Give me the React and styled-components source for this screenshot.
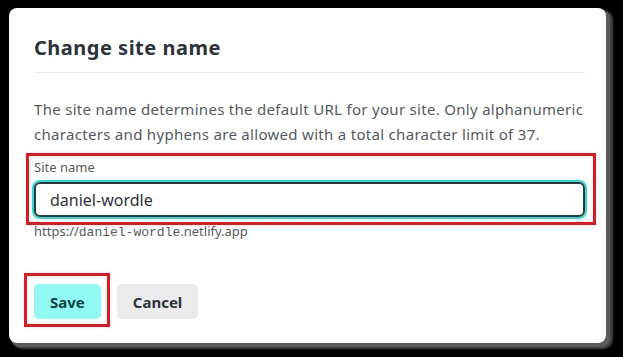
import React from "react";
import styled, { createGlobalStyle } from "styled-components";

const Global = createGlobalStyle`
  html, body { margin: 0; padding: 0; background: #000; }
  body { font-family: "Noto Sans", "Open Sans", sans-serif; }
  * { box-sizing: border-box; }
`;

const Page = styled.div`
  width: 623px;
  height: 357px;
  background: #000;
  padding: 8px 0 0 9px;
`;

const Card = styled.div`
  width: 597px;
  height: 335px;
  background: #fff;
  border-radius: 8px;
  box-shadow: 3px 3px 0 1px #5b5b5b, 5px 4px 2px 2px #444;
  padding: 26px 21px 0 25px;
  display: flex;
  flex-direction: column;
`;

const Title = styled.h2`
  margin: 0;
  font-size: 20px;
  font-weight: 700;
  letter-spacing: 0.5px;
  color: #2d3338;
  line-height: 28px;
  padding-bottom: 10px;
  border-bottom: 1px solid #e9ebed;
`;

const Text = styled.p`
  margin: 24px 0 0;
  font-size: 15px;
  line-height: 25px;
  color: #545a61;
  letter-spacing: 0.3px;
`;

const Annotated = styled.div`
  position: relative;
  margin-top: ${p => p.$mt || 0}px;
  &::after {
    content: "";
    position: absolute;
    left: ${p => p.$l}px;
    right: ${p => p.$r}px;
    top: ${p => p.$t}px;
    bottom: ${p => p.$b}px;
    border: 3px solid #e8151f;
    pointer-events: none;
  }
`;

const Field = styled.div`
  display: flex;
  flex-direction: column;
`;

const Label = styled.label`
  font-size: 13px;
  line-height: 18px;
  color: #545a61;
`;

const Input = styled.div`
  margin-top: 6px;
  height: 35px;
  border: 2px solid #30363b;
  border-radius: 6px;
  box-shadow: 0 0 0 2px #2bdcd6;
  display: flex;
  align-items: center;
  padding-left: 14px;
  font-size: 16px;
  color: #2d3338;
`;

const Hint = styled.div`
  margin-top: 5px;
  font-size: 13px;
  line-height: 18px;
  color: #545a61;
`;

const Mono = styled.span`
  font-family: "Liberation Mono", "DejaVu Sans Mono", monospace;
  font-size: 13px;
`;

const Actions = styled.div`
  margin-top: 42px;
  display: flex;
  gap: 16px;
`;

const Button = styled.button`
  height: 35px;
  border: none;
  border-radius: 5px;
  padding: 0 16px;
  font-family: inherit;
  font-size: 15px;
  font-weight: 700;
  background: ${p => (p.$primary ? "#8ff9f2" : "#e9ebed")};
  color: ${p => (p.$primary ? "#0d4441" : "#2d3338")};
`;

export default function App() {
  return (
    <>
      <Global />
      <Page>
        <Card>
          <Title>Change site name</Title>
          <Text>
            The site name determines the default URL for your site. Only alphanumeric
            characters and hyphens are allowed with a total character limit of 37.
          </Text>
          <Annotated $mt={11} $l={-8} $r={-11} $t={-5} $b={-8}>
            <Field>
              <Label>Site name</Label>
              <Input>daniel-wordle</Input>
            </Field>
          </Annotated>
          <Hint>
            https://<Mono>daniel-wordle</Mono>.netlify.app
          </Hint>
          <Actions>
            <Annotated $l={-10} $r={-9} $t={-11} $b={-8}>
              <Button $primary>Save</Button>
            </Annotated>
            <Button>Cancel</Button>
          </Actions>
        </Card>
      </Page>
    </>
  );
}
